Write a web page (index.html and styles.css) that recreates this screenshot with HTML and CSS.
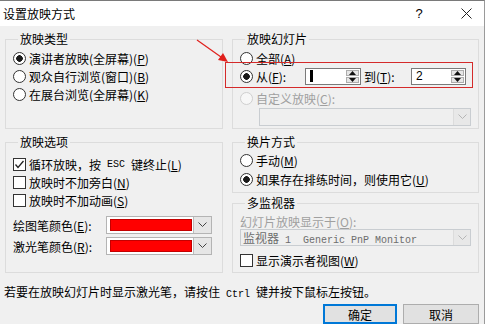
FILE: index.html
```html
<!DOCTYPE html>
<html lang="zh-CN">
<head>
    <meta charset="UTF-8">
    <title>设置放映方式</title>
    <link rel="stylesheet" href="styles.css">
</head>
<body>

<div class="window">
    <div class="titlebar">
        <span class="title">设置放映方式</span>
        <span class="help">?</span>
        <span class="close">
            <svg width="11" height="11" viewBox="0 0 11 11"><path d="M0.5 0.5 L10.5 10.5 M10.5 0.5 L0.5 10.5" stroke="#222" stroke-width="1" fill="none"/></svg>
        </span>
    </div>

    <div class="client">
        <div class="columns">
            <!-- columna izquierda -->
            <div class="col col-left">
                <fieldset class="group g-type">
                    <legend>放映类型</legend>
                    <div class="opt"><span class="radio on"></span>演讲者放映(全屏幕)(<u>P</u>)</div>
                    <div class="opt"><span class="radio"></span>观众自行浏览(窗口)(<u>B</u>)</div>
                    <div class="opt"><span class="radio"></span>在展台浏览(全屏幕)(<u>K</u>)</div>
                </fieldset>

                <fieldset class="group g-opts">
                    <legend>放映选项</legend>
                    <div class="opt"><span class="check"><svg width="11" height="11" viewBox="0 0 11 11"><path d="M1.5 5.5 L4 8.5 L9.5 2" stroke="#222" stroke-width="1.3" fill="none"/></svg></span>循环放映，按<span class="mono"> ESC </span>键终止(<u>L</u>)</div>
                    <div class="opt"><span class="check"></span>放映时不加旁白(<u>N</u>)</div>
                    <div class="opt"><span class="check"></span>放映时不加动画(<u>S</u>)</div>
                    <div class="color-row first">
                        <span class="color-label">绘图笔颜色(<u>E</u>):</span>
                        <span class="picker"><span class="swatch"></span><span class="picker-btn"><svg width="9" height="6" viewBox="0 0 9 6"><path d="M0.5 0.5 L4.5 4.5 L8.5 0.5" stroke="#444" fill="none"/></svg></span></span>
                    </div>
                    <div class="color-row">
                        <span class="color-label">激光笔颜色(<u>R</u>):</span>
                        <span class="picker"><span class="swatch"></span><span class="picker-btn"><svg width="9" height="6" viewBox="0 0 9 6"><path d="M0.5 0.5 L4.5 4.5 L8.5 0.5" stroke="#444" fill="none"/></svg></span></span>
                    </div>
                </fieldset>
            </div>

            <!-- columna derecha -->
            <div class="col col-right">
                <fieldset class="group g-slides">
                    <legend>放映幻灯片</legend>
                    <div class="opt"><span class="radio"></span>全部(<u>A</u>)</div>
                    <div class="opt">
                        <span class="radio on"></span><span class="from-label">从(<u>F</u>):</span>
                        <span class="spin spin-from">
                            <span class="spin-val"><span class="caret"></span></span>
                            <span class="spin-btns">
                                <span class="spin-btn"><svg width="7" height="4" viewBox="0 0 7 4"><path d="M0 4 L3.5 0 L7 4 Z" fill="#111"/></svg></span>
                                <span class="spin-btn"><svg width="7" height="4" viewBox="0 0 7 4"><path d="M0 0 L3.5 4 L7 0 Z" fill="#111"/></svg></span>
                            </span>
                        </span>
                        <span class="to-label">到(<u>T</u>):</span>
                        <span class="spin spin-to">
                            <span class="spin-val">2</span>
                            <span class="spin-btns">
                                <span class="spin-btn"><svg width="7" height="4" viewBox="0 0 7 4"><path d="M0 4 L3.5 0 L7 4 Z" fill="#111"/></svg></span>
                                <span class="spin-btn"><svg width="7" height="4" viewBox="0 0 7 4"><path d="M0 0 L3.5 4 L7 0 Z" fill="#111"/></svg></span>
                            </span>
                        </span>
                    </div>
                    <div class="opt off custom"><span class="radio dis"></span>自定义放映(<u>C</u>):</div>
                    <div class="combo combo-custom">
                        <span class="combo-text"></span>
                        <span class="combo-btn"><svg width="9" height="6" viewBox="0 0 9 6"><path d="M0.5 0.5 L4.5 4.5 L8.5 0.5" stroke="#b5b5b5" fill="none"/></svg></span>
                    </div>
                </fieldset>

                <fieldset class="group g-advance">
                    <legend>换片方式</legend>
                    <div class="opt"><span class="radio"></span>手动(<u>M</u>)</div>
                    <div class="opt"><span class="radio on"></span>如果存在排练时间，则使用它(<u>U</u>)</div>
                </fieldset>

                <fieldset class="group g-monitor">
                    <legend>多监视器</legend>
                    <div class="mon-label">幻灯片放映显示于(<u>O</u>):</div>
                    <div class="combo combo-monitor">
                        <span class="combo-text">监视器<span class="mono"> 1  Generic PnP Monitor</span></span>
                        <span class="combo-btn"><svg width="9" height="6" viewBox="0 0 9 6"><path d="M0.5 0.5 L4.5 4.5 L8.5 0.5" stroke="#b5b5b5" fill="none"/></svg></span>
                    </div>
                    <div class="opt presenter"><span class="check"></span>显示演示者视图(<u>W</u>)</div>
                </fieldset>
            </div>
        </div>

        <p class="hint">若要在放映幻灯片时显示激光笔，请按住<span class="mono"> Ctrl </span>键并按下鼠标左按钮。</p>

        <div class="buttons">
            <button class="btn btn-default">确定</button>
            <button class="btn btn-cancel">取消</button>
        </div>
    </div>
</div>

<!-- marca roja de la captura -->
<div class="mark-box"></div>
<svg class="mark-arrow" width="40" height="30" viewBox="0 0 40 30">
    <path d="M2 2 L26 19" stroke="#e0201c" stroke-width="1.2" fill="none"/>
    <path d="M33 24 L23 22 L28 15 Z" fill="#e0201c"/>
</svg>

</body>
</html>
```

FILE: styles.css
```css
/* Estilos generales */
* {
    box-sizing: border-box;
}

body {
    margin: 0;
    background-color: #ffffff;
    font-family: "Noto Sans CJK SC", sans-serif;
    font-size: 12px;
    color: #000;
}

u {
    text-decoration: underline;
    text-underline-offset: 1px;
}

.mono {
    font-family: "Liberation Mono", monospace;
    font-size: 10px;
    white-space: pre;
}

/* Ventana */
.window {
    width: 485px;
    height: 324px;
    border-top: 1px solid #7a7a7a;
    border-right: 1px solid #9a9a9a;
    background-color: #f0f0f0;
}

.titlebar {
    height: 25px;
    background-color: #ffffff;
    display: flex;
    align-items: center;
    padding-left: 3px;
}

.title {
    font-size: 12px;
}

.help {
    margin-left: auto;
    width: 30px;
    text-align: center;
    font-family: "Liberation Sans", sans-serif;
    font-size: 13px;
    margin-right: 14px;
}

.close {
    width: 36px;
    display: flex;
    justify-content: center;
}

.client {
    padding: 6px 5px 0 5px;
}

.columns {
    display: flex;
    gap: 9px;
}

.col {
    display: flex;
    flex-direction: column;
}

.col-left {
    width: 218px;
    gap: 6px;
}

.col-right {
    width: 247px;
}

/* Grupos */
.group {
    margin: 0;
    padding: 0 7px;
    border: 1px solid #dcdcdc;
    min-width: 0;
}

.group legend {
    padding: 0 2px;
    margin-left: 5px;
    font-size: 12px;
    line-height: 14px;
}

.g-type {
    height: 97px;
    padding-top: 3px;
}

.g-opts {
    height: 138px;
    padding-top: 6px;
}

.g-slides {
    height: 97px;
    padding-top: 3px;
}

.g-advance {
    height: 58px;
    margin-top: 6px;
    padding-top: 2px;
}

.g-advance .opt + .opt {
    margin-top: 1px;
}

.g-monitor {
    height: 77px;
    margin-top: 3px;
    padding-top: 4px;
}

/* Opciones */
.opt {
    display: flex;
    align-items: center;
    height: 18px;
    white-space: nowrap;
}

.off {
    color: #a0a0a0;
}

.radio {
    flex: none;
    width: 13px;
    height: 13px;
    border: 1px solid #333;
    border-radius: 50%;
    background: #fff;
    margin-right: 3px;
}

.radio.on {
    background: radial-gradient(circle, #1a1a1a 0 3px, #fff 3.6px);
}

.radio.dis {
    border-color: #cfcfcf;
    background: #f7f7f7;
}

.check {
    flex: none;
    width: 13px;
    height: 13px;
    border: 1px solid #333;
    background: #fff;
    margin-right: 3px;
    display: flex;
    align-items: center;
    justify-content: center;
}

/* Selectores de color */
.color-row {
    display: flex;
    align-items: center;
    height: 18px;
    margin-top: 3px;
}

.color-row.first {
    margin-top: 7px;
}

.color-label {
    width: 93px;
    white-space: nowrap;
}

.picker {
    width: 106px;
    height: 18px;
    border: 1px solid #b4b4b4;
    background: #fff;
    display: flex;
    align-items: center;
}

.swatch {
    width: 82px;
    height: 12px;
    margin-left: 3px;
    background: #ff0000;
    border: 1px solid #c40000;
}

.picker-btn {
    margin-left: auto;
    width: 18px;
    height: 16px;
    background: #e6e6e6;
    border-left: 1px solid #bcbcbc;
    display: flex;
    align-items: center;
    justify-content: center;
}

/* Rango de diapositivas */
.from-label {
    width: 49px;
}

.to-label {
    width: 47px;
    margin-left: 3px;
}

.spin {
    display: flex;
    height: 17px;
    border: 1px solid #7a7a7a;
    background: #fff;
}

.spin-from {
    width: 56px;
}

.spin-to {
    width: 55px;
}

.spin-val {
    flex: 1;
    padding-left: 4px;
    line-height: 15px;
    font-family: "Liberation Sans", sans-serif;
    font-size: 12px;
    display: flex;
    align-items: center;
}

.caret {
    width: 3px;
    height: 12px;
    background: #000;
}

.spin-btns {
    width: 14px;
    display: flex;
    flex-direction: column;
    padding: 1px 1px 1px 0;
    gap: 1px;
}

.spin-btn {
    flex: 1;
    background: #e6e6e6;
    border: 1px solid #adadad;
    display: flex;
    align-items: center;
    justify-content: center;
}

.custom {
    margin-top: 4px;
}

/* Listas desplegables deshabilitadas */
.combo {
    display: flex;
    border: 1px solid #c9cdd1;
    background: #efefef;
}

.combo-custom {
    width: 212px;
    height: 18px;
    margin: 1px 0 0 19px;
}

.combo-monitor {
    height: 17px;
}

.combo-text {
    flex: 1;
    padding-left: 2px;
    color: #6d6d6d;
    line-height: 15px;
    white-space: nowrap;
}

.combo-btn {
    width: 17px;
    background: #e8e8e8;
    border-left: 1px solid #dcdcdc;
    display: flex;
    align-items: center;
    justify-content: center;
}

.mon-label {
    height: 15px;
    line-height: 15px;
    color: #a0a0a0;
    white-space: nowrap;
}

.presenter {
    margin-top: 5px;
}

/* Pie */
.hint {
    margin: 12px 0 0 -1px;
    line-height: 14px;
    white-space: nowrap;
}

.buttons {
    display: flex;
    justify-content: flex-end;
    gap: 6px;
    margin-top: 2px;
}

.btn {
    height: 20px;
    padding: 0;
    font-family: inherit;
    font-size: 12px;
    color: #000;
    background: #e1e1e1;
    border: 1px solid #adadad;
}

.btn-default {
    width: 74px;
    border-color: #0078d7;
    box-shadow: inset 0 0 0 1px #0078d7;
}

.btn-cancel {
    width: 76px;
}

/* Marca roja */
.mark-box {
    position: absolute;
    left: 225px;
    top: 62px;
    width: 248px;
    height: 26px;
    border: 1px solid #d42a2a;
}

.mark-arrow {
    position: absolute;
    left: 195px;
    top: 38px;
}
```
